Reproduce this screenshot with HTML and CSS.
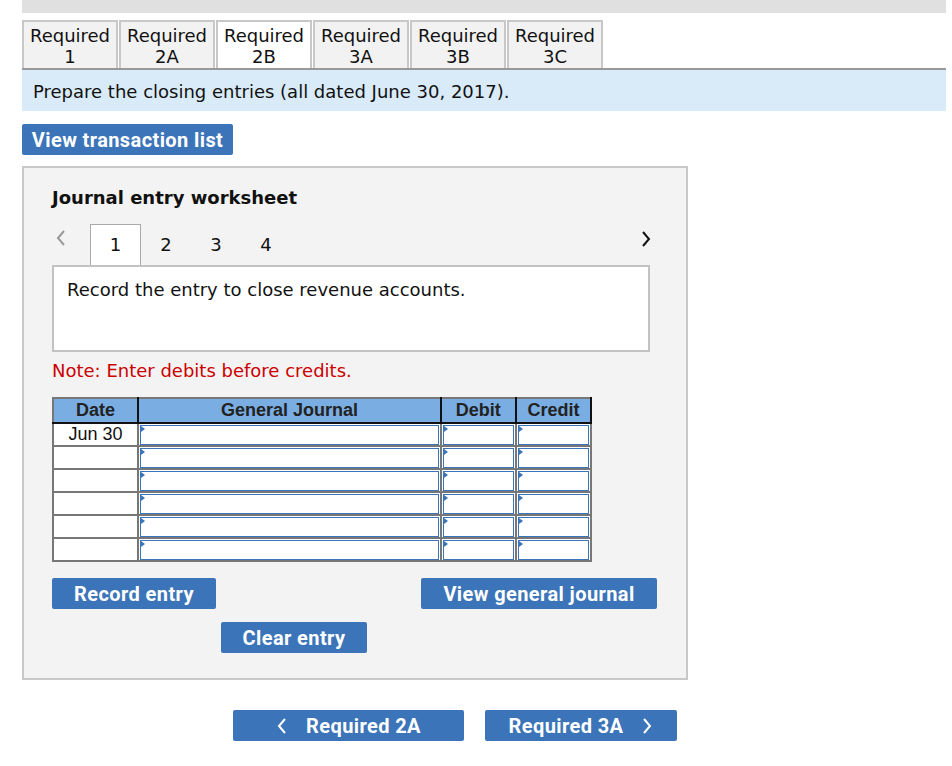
FILE: index.html
```html
<!DOCTYPE html>
<html lang="en">
<head>
    <meta charset="UTF-8">
    <title>Journal entry worksheet</title>
    <link rel="stylesheet" href="styles.css">
</head>
<body>
    <div class="page">
        <div class="topbar"></div>
        <div class="tabs">
            <div class="tab">Required<br>1</div>
            <div class="tab">Required<br>2A</div>
            <div class="tab active">Required<br>2B</div>
            <div class="tab">Required<br>3A</div>
            <div class="tab">Required<br>3B</div>
            <div class="tab">Required<br>3C</div>
        </div>
        <div class="prompt">Prepare the closing entries (all dated June 30, 2017).</div>
        <button class="btn btn-list">View transaction list</button>

        <div class="worksheet">
            <h3>Journal entry worksheet</h3>
            <div class="pager">
                <svg class="chev prev" width="12" height="18" viewBox="0 0 12 18"><polyline points="9,2 3,9 9,16" fill="none" stroke="#999" stroke-width="2"/></svg>
                <span class="page-num current">1</span>
                <span class="page-num">2</span>
                <span class="page-num">3</span>
                <span class="page-num">4</span>
                <svg class="chev next" width="12" height="18" viewBox="0 0 12 18"><polyline points="3,2 9,9 3,16" fill="none" stroke="#111" stroke-width="2"/></svg>
            </div>
            <div class="desc">Record the entry to close revenue accounts.</div>
            <p class="note">Note: Enter debits before credits.</p>

            <table class="journal">
                <thead>
                    <tr>
                        <th class="c-date">Date</th>
                        <th class="c-acct">General Journal</th>
                        <th class="c-num">Debit</th>
                        <th class="c-num">Credit</th>
                    </tr>
                </thead>
                <tbody>
                    <tr>
                        <td class="c-date">Jun 30</td>
                        <td><div class="field"></div></td>
                        <td><div class="field"></div></td>
                        <td><div class="field"></div></td>
                    </tr>
                    <tr>
                        <td class="c-date"></td>
                        <td><div class="field"></div></td>
                        <td><div class="field"></div></td>
                        <td><div class="field"></div></td>
                    </tr>
                    <tr>
                        <td class="c-date"></td>
                        <td><div class="field"></div></td>
                        <td><div class="field"></div></td>
                        <td><div class="field"></div></td>
                    </tr>
                    <tr>
                        <td class="c-date"></td>
                        <td><div class="field"></div></td>
                        <td><div class="field"></div></td>
                        <td><div class="field"></div></td>
                    </tr>
                    <tr>
                        <td class="c-date"></td>
                        <td><div class="field"></div></td>
                        <td><div class="field"></div></td>
                        <td><div class="field"></div></td>
                    </tr>
                    <tr>
                        <td class="c-date"></td>
                        <td><div class="field"></div></td>
                        <td><div class="field"></div></td>
                        <td><div class="field"></div></td>
                    </tr>
                </tbody>
            </table>

            <div class="actions">
                <button class="btn btn-record">Record entry</button>
                <button class="btn btn-view">View general journal</button>
            </div>
            <div class="actions-2">
                <button class="btn btn-clear">Clear entry</button>
            </div>
        </div>

        <div class="bottom-nav">
            <button class="btn btn-nav btn-prev">
                <svg width="12" height="18" viewBox="0 0 12 18"><polyline points="9,2 3,9 9,16" fill="none" stroke="#fff" stroke-width="2"/></svg>
                Required 2A
            </button>
            <button class="btn btn-nav btn-next">
                Required 3A
                <svg width="12" height="18" viewBox="0 0 12 18"><polyline points="3,2 9,9 3,16" fill="none" stroke="#fff" stroke-width="2"/></svg>
            </button>
        </div>
    </div>
</body>
</html>
```

FILE: styles.css
```css
body {
    margin: 0;
    background: #fff;
    color: #111;
    font-family: "DejaVu Sans", Verdana, sans-serif;
    font-size: 18px;
}
.page {
    padding-left: 22px;
    padding-right: 6px;
}
.topbar {
    height: 13px;
    background: #e0e0e0;
}
.tabs {
    display: flex;
    gap: 1px;
    margin-top: 7px;
    border-bottom: 2px solid #999;
}
.tab {
    width: 96px;
    height: 48px;
    box-sizing: border-box;
    background: #f2f2f2;
    border: 2px solid #c8c8c8;
    border-bottom: none;
    text-align: center;
    line-height: 21px;
    padding-top: 3px;
}
.tab.active {
    background: #fff;
}
.prompt {
    background: #d9ebf8;
    height: 41px;
    line-height: 43px;
    padding-left: 11px;
}
.btn {
    background: #3b74b8;
    color: #fff;
    border: none;
    border-radius: 2px;
    font-family: Roboto, "Liberation Sans", sans-serif;
    font-weight: bold;
    font-size: 20px;
    letter-spacing: 0.4px;
    height: 31px;
    padding: 0;
    cursor: pointer;
}
.btn-list {
    display: block;
    margin-top: 13px;
    width: 211px;
}
.worksheet {
    margin-top: 11px;
    width: 634px;
    background: #f3f3f3;
    border: 2px solid #c8c8c8;
    padding: 0 0 25px 28px;
}
.worksheet h3 {
    margin: 18px 0 0;
    font-size: 18px;
    font-weight: bold;
    height: 24px;
    line-height: 24px;
}
.pager {
    display: flex;
    align-items: flex-end;
    margin-top: 14px;
    height: 41px;
    position: relative;
    width: 598px;
}
.chev.prev {
    margin: 0 23px 18px 3px;
}
.chev.next {
    position: absolute;
    right: -2px;
    top: 6px;
}
.page-num {
    width: 50px;
    text-align: center;
    line-height: 41px;
}
.page-num.current {
    height: 41px;
    width: 51px;
    background: #fff;
    border: 1px solid #aaa;
    border-bottom: none;
    box-sizing: border-box;
    line-height: 40px;
}
.desc {
    width: 598px;
    height: 87px;
    background: #fff;
    border: 2px solid #c2c2c2;
    padding: 12px 0 0 13px;
    box-sizing: border-box;
    line-height: 22px;
}
.note {
    color: #c00;
    margin: 7px 0 0;
    height: 24px;
    line-height: 24px;
}
.journal {
    margin-top: 14px;
    width: 540px;
    border-collapse: collapse;
    border: 2px solid #777;
    font-family: "Liberation Sans", Arial, sans-serif;
    font-size: 18px;
    table-layout: fixed;
}
.journal th {
    background: #7aaee2;
    color: #222;
    height: 23px;
    padding: 0;
    font-weight: bold;
    border-right: 2px solid #111;
    border-bottom: 2px solid #111;
    line-height: 23px;
}
.journal td {
    padding: 1px 1px 0;
    height: 20px;
    background: #fff;
    border-right: 2px solid #777;
    border-bottom: 2px solid #777;
    vertical-align: top;
}
.journal td.c-date {
    text-align: center;
    padding: 0;
    line-height: 21px;
}
.c-date {
    width: 83px;
}
.c-acct {
    width: 300px;
}
.c-num {
    width: 73px;
}
.field {
    height: 18px;
    border: 1px solid #3b74b8;
    position: relative;
}
.field::before {
    content: "";
    position: absolute;
    left: 0;
    top: 0;
    border-left: 4px solid #3b74b8;
    border-top: 3px solid transparent;
    border-bottom: 3px solid transparent;
}
.actions {
    display: flex;
    justify-content: space-between;
    margin-top: 16px;
    width: 605px;
}
.btn-record {
    width: 164px;
}
.btn-view {
    width: 236px;
}
.actions-2 {
    margin-top: 13px;
    padding-left: 169px;
}
.btn-clear {
    width: 146px;
}
.bottom-nav {
    display: flex;
    gap: 21px;
    margin-top: 30px;
    padding-left: 211px;
}
.btn-nav {
    display: flex;
    align-items: center;
    justify-content: center;
    gap: 18px;
}
.btn-prev {
    width: 231px;
}
.btn-next {
    width: 192px;
}
```
